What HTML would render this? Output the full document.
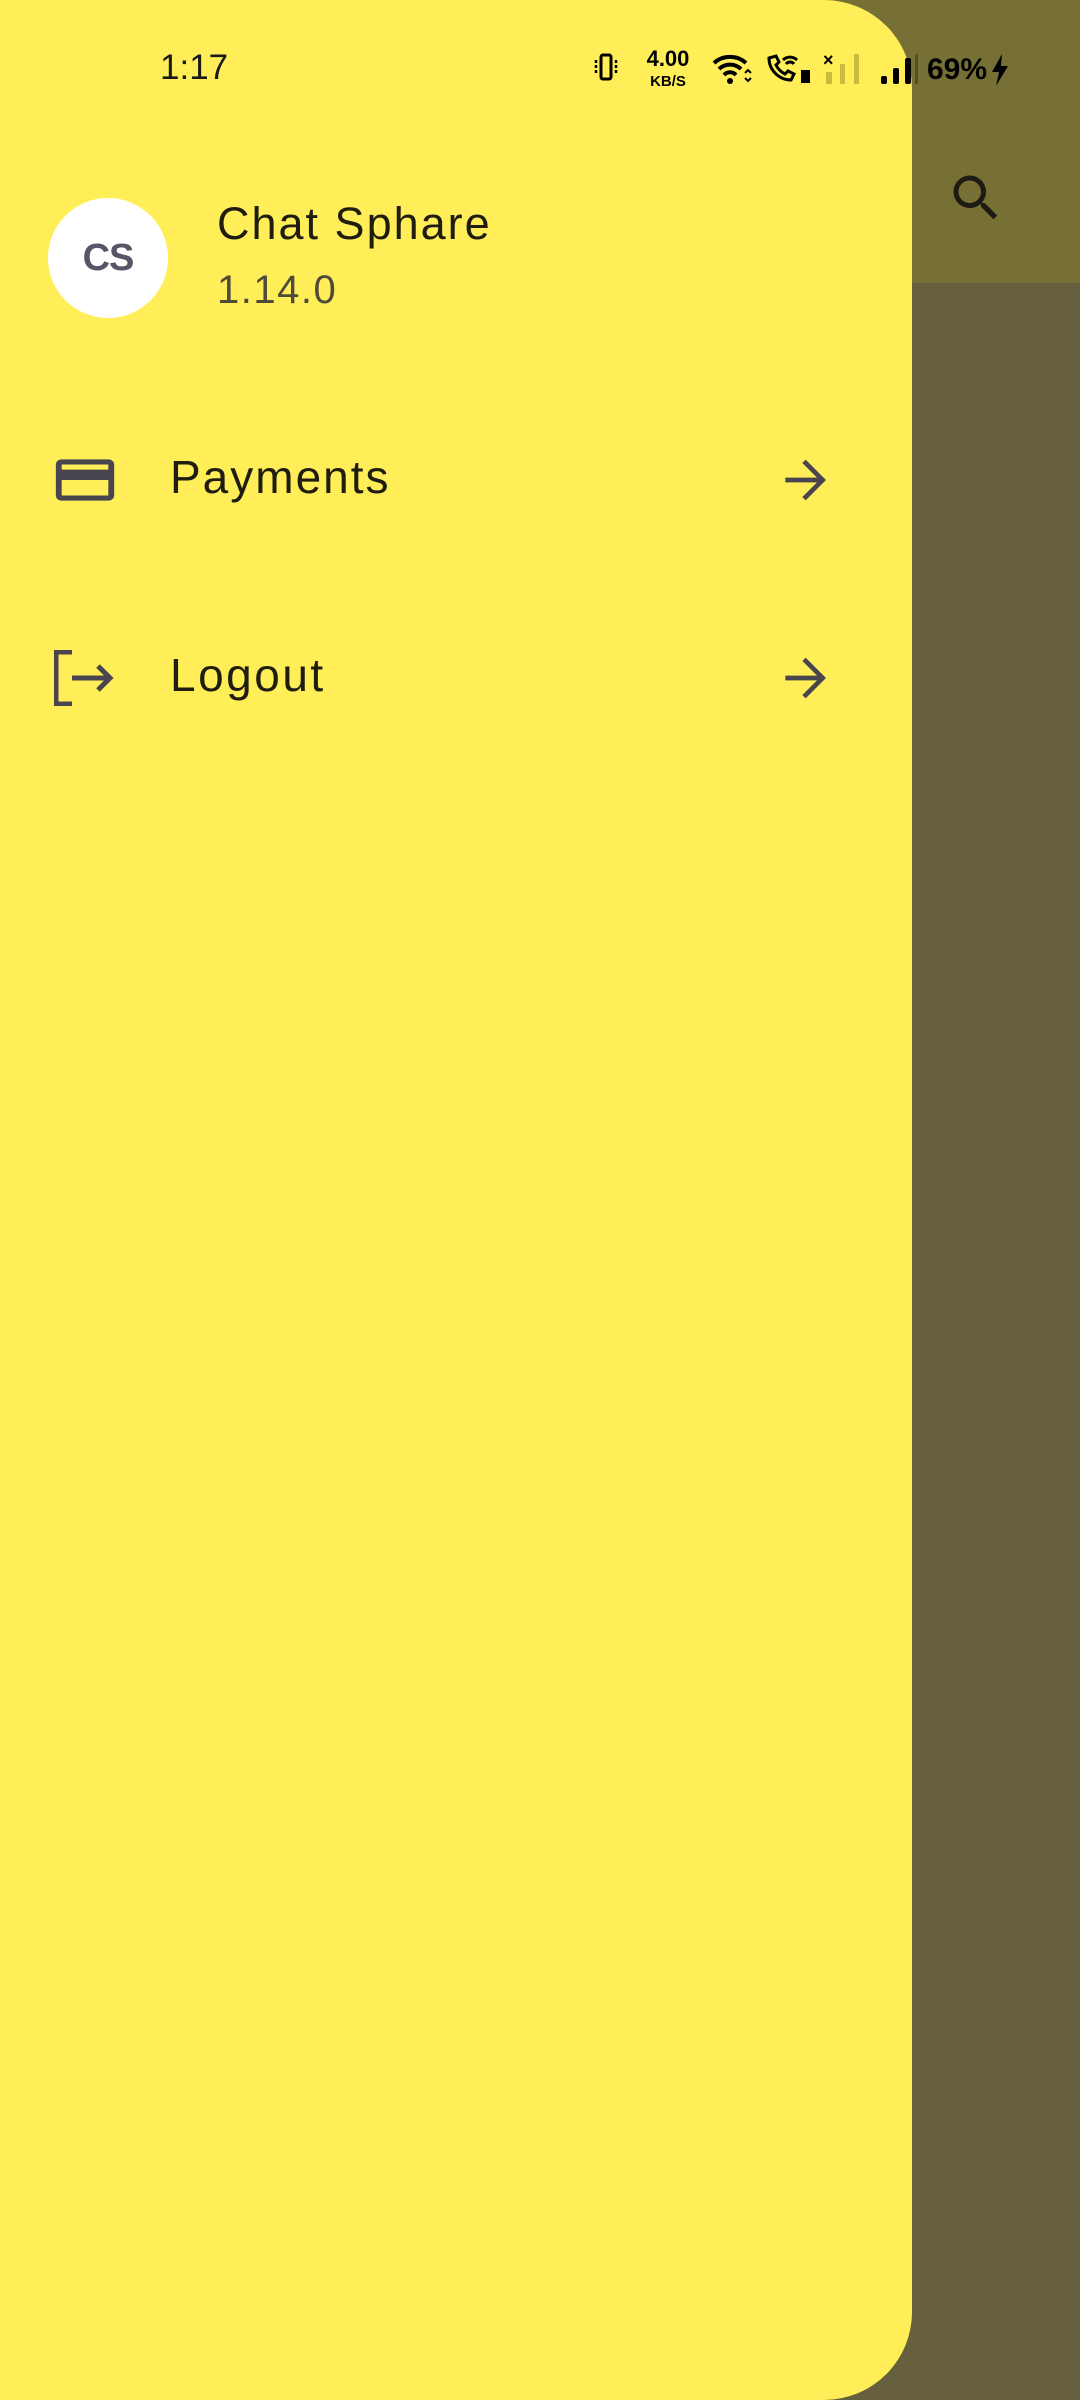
<!DOCTYPE html>
<html><head><meta charset="utf-8"><style>
*{margin:0;padding:0;box-sizing:border-box}
body{width:1080px;height:2400px;background:#66603f;position:relative;overflow:hidden;font-family:"Liberation Sans",sans-serif}
.appbar{position:absolute;left:0;top:0;width:1080px;height:283px;background:#777035}
.drawer{position:absolute;left:0;top:0;width:912px;height:2400px;background:#ffee58;border-radius:0 88px 88px 0}
.abs{position:absolute}
</style></head><body>
<div class="appbar"></div>
<svg class="abs" style="left:946px;top:168px" width="60" height="60" viewBox="0 0 24 24"><path fill="#1d1b16" d="M15.5 14h-.79l-.28-.27A6.47 6.47 0 0 0 16 9.5 6.5 6.5 0 1 0 9.5 16c1.61 0 3.09-.59 4.230-1.57l.27.28v.79l5 4.99L20.49 19l-4.99-5zm-6 0C7.01 14 5 11.990 5 9.5S7.01 5 9.5 5 14 7.01 14 9.5 11.99 14 9.5 14z"/></svg>
<div class="drawer"></div>

<div class="abs" style="left:160px;top:48px;font-size:35px;color:#1a1a1a">1:17</div>
<svg class="abs" style="left:594px;top:52px" width="24" height="30" viewBox="0 0 24 30"><rect x="7" y="3" width="10" height="24" rx="2" fill="none" stroke="#000" stroke-width="3"/><path d="M2 8v14M22 8v14" stroke="#000" stroke-width="2.5" stroke-dasharray="3 2"/></svg>
<div class="abs" style="left:640px;top:49px;font-size:22px;font-weight:bold;color:#000;line-height:20px;text-align:center;width:56px">4.00<br><span style="font-size:15px">KB/S</span></div>
<svg class="abs" style="left:712px;top:53px" width="40" height="32" viewBox="0 0 40 32"><path d="M2 10a24 24 0 0 1 32 0M7 16a16 16 0 0 1 22 0M12 22a8 8 0 0 1 12 0" stroke="#000" stroke-width="4" fill="none"/><circle cx="18" cy="28" r="3" fill="#000"/><path d="M33 20l3-3 3 3M33 25l3 3 3-3" stroke="#000" stroke-width="2" fill="none"/></svg>
<svg class="abs" style="left:765px;top:52px" width="46" height="32" viewBox="0 0 46 32"><path d="M4 6c0 12 10 22 22 22l3-6-6-3-3 3c-4-2-7-5-9-9l3-3-3-6z" stroke="#000" stroke-width="3" fill="none"/><path d="M18 8a10 10 0 0 1 14 0M21 12a5 5 0 0 1 8 0" stroke="#000" stroke-width="3" fill="none"/><rect x="36" y="18" width="9" height="13" fill="#000"/></svg>
<div class="abs" style="left:823px;top:50px;font-size:18px;font-weight:bold">×</div>
<svg class="abs" style="left:823px;top:52px" width="40" height="34" viewBox="0 0 40 34"><rect x="3" y="20" width="6" height="12" fill="#c9bb3e"/><rect x="17" y="12" width="5" height="20" fill="#c9bb3e"/><rect x="31" y="2" width="5" height="30" fill="#c9bb3e"/></svg>
<svg class="abs" style="left:879px;top:52px" width="40" height="34" viewBox="0 0 40 34"><rect x="2" y="24" width="6" height="8" rx="2" fill="#000"/><rect x="14" y="16" width="6" height="16" rx="2" fill="#000"/><rect x="26" y="6" width="6" height="26" rx="2" fill="#000"/><rect x="36" y="2" width="3" height="30" fill="#555020"/></svg>
<div class="abs" style="left:927px;top:53px;font-size:30px;font-weight:bold;color:#000">69%</div>
<svg class="abs" style="left:990px;top:54px" width="20" height="32" viewBox="0 0 20 32"><path d="M12 0L2 18h7l-3 14 12-20h-7z" fill="#000"/></svg>

<div class="abs" style="left:48px;top:198px;width:120px;height:120px;border-radius:50%;background:#fff;text-align:center;line-height:120px;font-size:38px;font-weight:bold;color:#5a5468;letter-spacing:-1px">CS</div>
<div class="abs" style="left:217px;top:198px;font-size:45px;color:#1f1c10;letter-spacing:2px">Chat Sphare</div>
<div class="abs" style="left:217px;top:268px;font-size:40px;color:#4e4b3a;letter-spacing:1.5px">1.14.0</div>

<svg class="abs" style="left:50px;top:449px" width="70" height="62" viewBox="0 0 24 24" preserveAspectRatio="none"><path fill="#49454f" d="M20 4H4c-1.11 0-1.99.89-1.99 2L2 18c0 1.11.89 2 2 2h16c1.11 0 2-.89 2-2V6c0-1.11-.89-2-2-2zm0 14H4v-6h16v6zm0-10H4V6h16v2z"/></svg>
<div class="abs" style="left:170px;top:450px;font-size:46px;color:#1f1c10;letter-spacing:2px">Payments</div>
<svg class="abs" style="left:776px;top:452px" width="56" height="56" viewBox="0 0 24 24"><path d="M4 12h15M12 4l8 8-8 8" stroke="#49454f" stroke-width="2" fill="none"/></svg>

<svg class="abs" style="left:54px;top:650px" width="62" height="56" viewBox="0 0 62 56"><path d="M18 2H2v52h16" stroke="#49454f" stroke-width="5" fill="none"/><path d="M18 28h38M44 16l12 12-12 12" stroke="#49454f" stroke-width="5" fill="none"/></svg>
<div class="abs" style="left:170px;top:648px;font-size:46px;color:#1f1c10;letter-spacing:2.5px">Logout</div>
<svg class="abs" style="left:776px;top:650px" width="56" height="56" viewBox="0 0 24 24"><path d="M4 12h15M12 4l8 8-8 8" stroke="#49454f" stroke-width="2" fill="none"/></svg>
</body></html>
